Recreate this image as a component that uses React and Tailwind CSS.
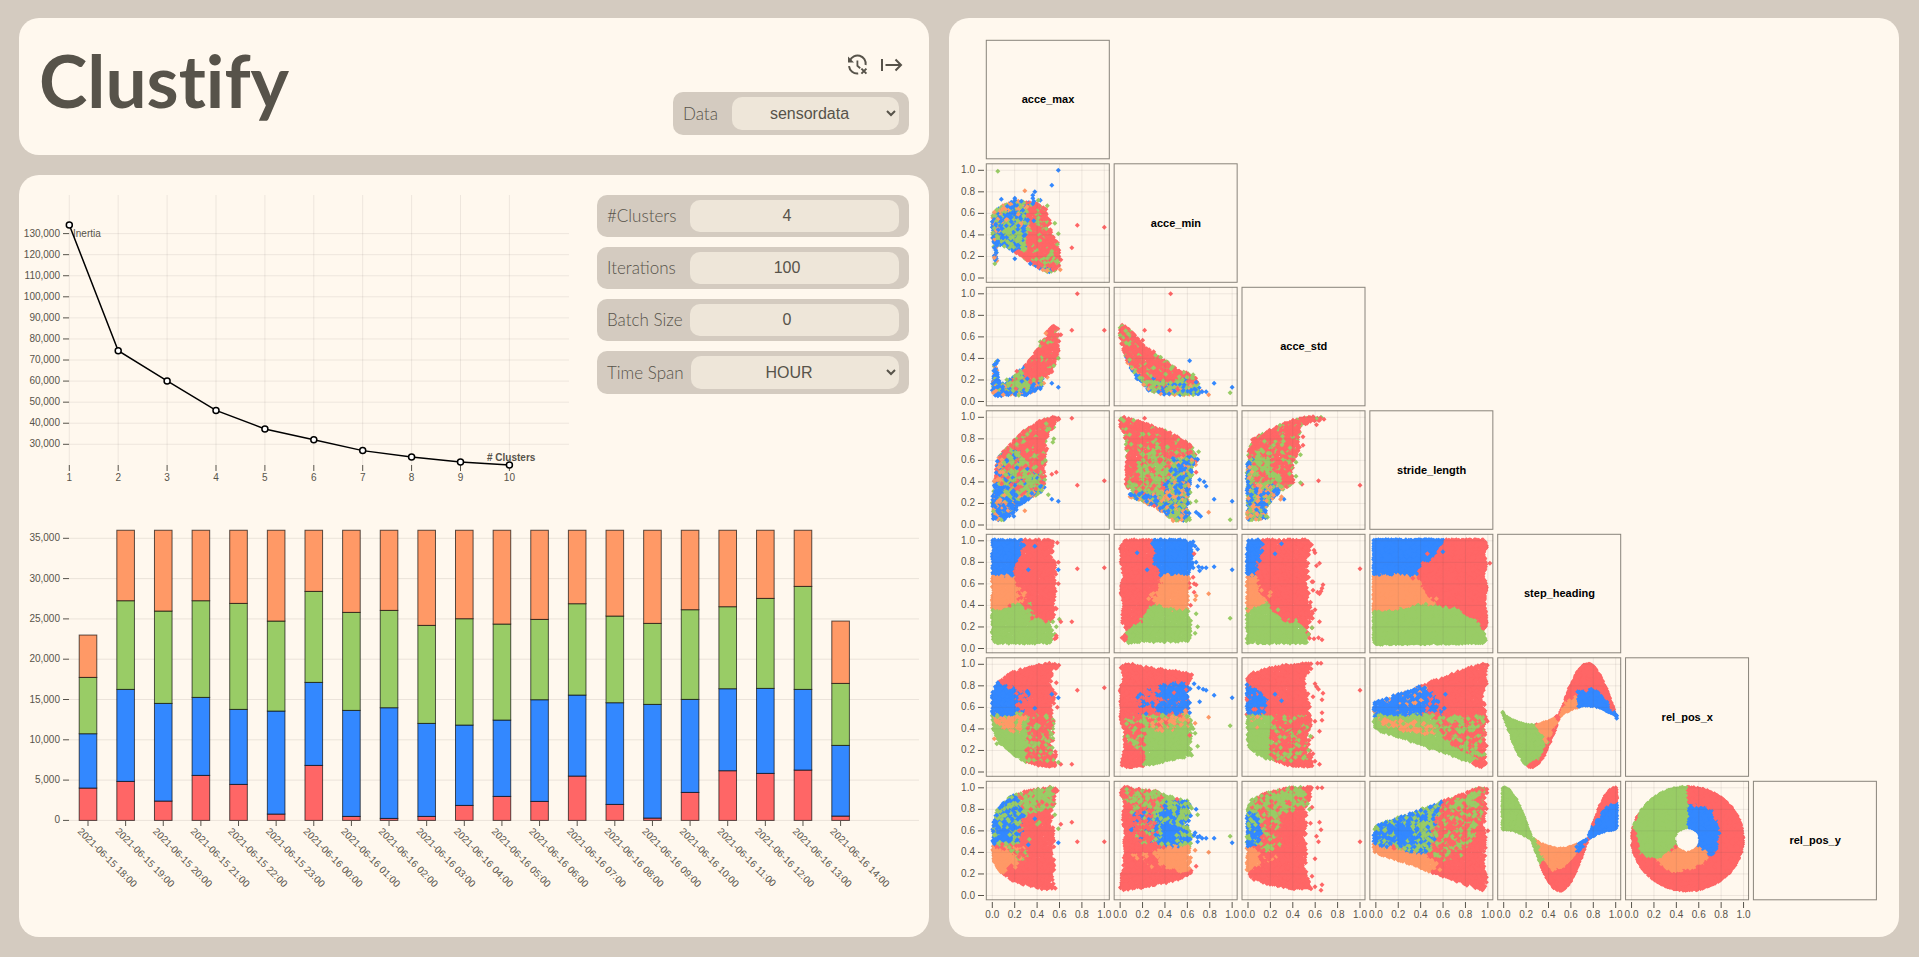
import React, { useMemo } from "react";

const INK = "#57534a";
const COLORS = { r: "#ff6666", b: "#3388ff", g: "#99cc66", o: "#ff9966" };

/* ---------- Inertia chart ---------- */

const inertia = [134100, 74400, 60100, 46100, 37300, 32200, 27000, 24000, 21600, 20200];

function ElbowChart() {
  const x = (k) => 50.3 + (k - 1) * 48.9;
  const y = (v) => 249.3 - ((v - 30000) / 10000) * 21.07;
  const ticks = Array.from({ length: 11 }, (_, i) => 130000 - i * 10000);
  return (
    <svg viewBox="0 0 578 322" className="block h-auto w-full text-[10px]" role="img" aria-label="Inertia by number of clusters">
      {inertia.map((_, i) => (
        <g key={i}>
          <line x1={x(i + 1)} x2={x(i + 1)} y1="0" y2="270" stroke={INK} strokeOpacity="0.1" />
          <line x1={x(i + 1)} x2={x(i + 1)} y1="270" y2="276" stroke={INK} />
          <text x={x(i + 1)} y="286" textAnchor="middle" fill={INK}>{i + 1}</text>
        </g>
      ))}
      {ticks.map((t) => (
        <g key={t}>
          <line x1="50" x2="550" y1={y(t)} y2={y(t)} stroke={INK} strokeOpacity="0.1" />
          <line x1="44" x2="50" y1={y(t)} y2={y(t)} stroke={INK} />
          <text x="41" y={y(t) + 3} textAnchor="end" fill={INK}>{t.toLocaleString("en-US")}</text>
        </g>
      ))}
      <text x="54" y={y(130000) + 3} fill={INK}>Inertia</text>
      <text x="468" y="266" fontWeight="700" fill={INK}>{"# Clusters"}</text>
      <polyline
        points={inertia.map((v, i) => `${x(i + 1)},${y(v)}`).join(" ")}
        fill="none"
        stroke="#000"
        strokeWidth="1.5"
      />
      {inertia.map((v, i) => (
        <circle key={i} cx={x(i + 1)} cy={y(v)} r="3" fill="#fff" stroke="#000" strokeWidth="1.5" />
      ))}
    </svg>
  );
}

/* ---------- Stacked bars: cumulative counts per hour ---------- */

const bars = [
  [4012, 10754, 17743, 22996],
  [4839, 16254, 27256, 36000],
  [2399, 14517, 25974, 36000],
  [5584, 15262, 27256, 36000],
  [4467, 13773, 26925, 36000],
  [786, 13566, 24733, 36000],
  [6824, 17123, 28414, 36000],
  [496, 13649, 25809, 36000],
  [248, 13980, 26057, 36000],
  [496, 12036, 24196, 36000],
  [1861, 11829, 25023, 36000],
  [2978, 12449, 24361, 36000],
  [2358, 14972, 24940, 36000],
  [5501, 15551, 26884, 36000],
  [1985, 14600, 25354, 36000],
  [290, 14393, 24444, 36000],
  [3474, 15014, 26140, 36000],
  [6163, 16337, 26512, 36000],
  [5832, 16379, 27546, 36000],
  [6245, 16254, 29035, 36000],
  [538, 9306, 16999, 24733],
];

function hourLabel(i) {
  const h = 18 + i;
  return `2021-06-${h < 24 ? 15 : 16} ${String(h % 24).padStart(2, "0")}:00`;
}

function StackedBars() {
  const x = (i) => 69 + i * 37.63;
  const y = (v) => 303.4 - (v / 5000) * 40.3;
  const fills = [COLORS.r, COLORS.b, COLORS.g, COLORS.o];
  return (
    <svg viewBox="0 0 910 400" className="block h-auto w-full text-[10px]" role="img" aria-label="Cluster sizes by hour">
      {[0, 1, 2, 3, 4, 5, 6, 7].map((k) => (
        <g key={k}>
          <line x1="50" x2="900" y1={y(k * 5000)} y2={y(k * 5000)} stroke={INK} strokeOpacity="0.12" />
          <line x1="44" x2="50" y1={y(k * 5000)} y2={y(k * 5000)} stroke={INK} />
          <text x="41" y={y(k * 5000) + 3} textAnchor="end" fill={INK}>{(k * 5000).toLocaleString("en-US")}</text>
        </g>
      ))}
      {bars.map((b, i) => (
        <g key={i}>
          {b.map((v, j) => (
            <rect
              key={j}
              x={x(i) - 8.8}
              width="17.6"
              y={y(v)}
              height={y(j ? b[j - 1] : 0) - y(v)}
              fill={fills[j]}
              stroke="#000"
              strokeOpacity="0.65"
            />
          ))}
          <line x1={x(i)} x2={x(i)} y1="304" y2="309" stroke={INK} />
          <text transform={`translate(${x(i) - 11} 315) rotate(45)`} fill={INK}>{hourLabel(i)}</text>
        </g>
      ))}
    </svg>
  );
}

/* ---------- Scatter matrix ---------- */

const features = ["acce_max", "acce_min", "acce_std", "stride_length", "step_heading", "rel_pos_x", "rel_pos_y"];

const wedge = [-2, 64, 94, 100, 100, 101, 97, 91, 99, 81, 96, 66, 99, 50, 97, 35, 99, 20, 97, 4, 90, 6, 78, 12, -2, 40];

function band(shape) {
  const top = [];
  const bottom = [];
  for (let u = -1; u <= 101; u += 2) {
    const s = shape((u / 100) * 2 * Math.PI);
    const a = 52.5 + 47.5 * s;
    const c = 52.5 + 9.5 * s;
    top.push(u, Math.max(a, c) + 0.5);
    bottom.unshift([u, Math.min(a, c) - 0.5]);
  }
  return top.concat(...bottom);
}

const disc = Array.from({ length: 48 }, (_, i) => {
  const t = (i / 48) * 2 * Math.PI;
  return [50 + 49.5 * Math.cos(t), 52.6 + 48 * Math.sin(t)];
}).flat();

/* Every region is a flat list of u,v pairs in percent of the axis range;
   its mix lists the cluster colours that occur there. */
const cells = {
  "1-0": {
    outline: [0, 56, 2, 63, 7, 66, 19, 72, 31, 70, 41, 70, 49, 63, 51, 47, 54, 41, 59, 28, 60, 7, 51, 5, 43, 8, 31, 16, 22, 22, 13, 29, 7, 30, 4, 27, 4, 13, 2, 13, 0, 41],
    mix: "bgobbg",
    zones: [
      ["rrrrrrg", [32, 72, 43, 72, 52, 64, 62, 40, 62, 4, 31, 14, 20, 24, 30, 40]],
      ["gggggb", [10, 48, 22, 50, 32, 36, 30, 24, 14, 30]],
    ],
    noise: 4,
    extra: "g5,99 b59,100 b53,86 b38,80 b8,73 o29,81 r76,49 r100,47 r71,28 r61,17 g59,41 g56,51 g49,67 b43,72 g41,72 g35,68 b36,69 o31,66 g53,25 g53,22 g47,14 g41,56 b37,53 b20,74 b20,72 b36,77 b36,74 b37,71 b26,71 b34,13 b20,18",
  },
  "2-0": {
    outline: [0, 5, 0, 13, 2, 37, 4, 37, 5, 23, 7, 16, 13, 18, 20, 24, 31, 35, 43, 54, 54, 70, 58, 71, 60, 50, 57, 33, 50, 24, 43, 13, 31, 6],
    mix: "bgobb",
    zones: [
      ["ggggrb", [10, 8, 15, 20, 30, 33, 45, 20, 30, 12]],
      ["rrrrrrrg", [27, 26, 31, 37, 43, 56, 54, 73, 62, 71, 60, 30, 45, 22, 35, 16]],
    ],
    noise: 2,
    extra: "r76,100 r71,66 r100,66 r61,62 r22,28 b5,38 b53,17 b59,13 g13,20 g59,40 g55,33 b43,12 b38,10",
  },
  "2-1": {
    outline: [-1, 66, 1, 71, 5, 70, 12, 63, 21, 52, 31, 44, 47, 33, 65, 24, 70, 16, 72, 10, 71, 6, 41, 6, 26, 10, 15, 21, 6, 37, 1, 54],
    mix: "rrrrrg",
    zones: [
      ["bgogb", [3, 42, 8, 36, 15, 27, 30, 14, 45, 12, 60, 17, 76, 18, 76, 0, 20, 0]],
      ["ggggrb", [18, 25, 26, 22, 40, 18, 60, 22, 62, 16, 45, 9, 28, 11]],
    ],
    noise: 3,
    extra: "r45,100 r22,66 r44,66 r20,57 b62,38 b84,17 b100,13 g98,8 o79,6 b77,9 b73,9 b68,18 g8,53 g36,41 g47,32 g65,25 r30,46",
  },
  "3-0": {
    outline: [0, 5, 0, 23, 2, 44, 5, 63, 13, 72, 25, 85, 40, 95, 57, 101, 60, 98, 54, 89, 49, 81, 49, 60, 46, 54, 48, 35, 43, 30, 28, 21, 19, 12, 10, 4],
    mix: "rrrrg",
    zones: [
      ["gggrrgb", [5, 62, 20, 72, 35, 55, 46, 45, 46, 35, 30, 25, 5, 40]],
      ["oogbr", [-2, 60, -2, 30, 8, 38, 9, 68]],
      ["bbbgo", [-2, -2, -2, 40, 12, 36, 25, 26, 48, 38, 50, 28, 30, -2]],
    ],
    noise: 4,
    extra: "r71,99 r76,37 r100,41 r53,47 r57,49 b53,24 b59,22 o29,13 g55,80 g50,28 g48,94 g54,77 b19,8 r59,99",
  },
  "3-1": {
    outline: [-1, 98, 3, 101, 15, 97, 29, 92, 47, 85, 62, 75, 67, 69, 68, 60, 64, 44, 62, 13, 62, 4, 49, 4, 38, 12, 24, 20, 8, 26, 7, 29, 14, 31, 5, 35, 6, 66, 4, 85, 0, 92],
    mix: "rrrrrg",
    zones: [
      ["ggrgr", [8, 35, 22, 70, 45, 72, 52, 50, 45, 20, 25, 22]],
      ["bbgog", [45, 45, 48, 64, 70, 66, 70, 0, 48, 2, 30, 17, 8, 22, 8, 31, 35, 30]],
      ["ggggr", [28, 40, 30, 58, 40, 56, 42, 38]],
    ],
    noise: 5,
    extra: "b71,42 b77,36 b84,24 b100,22 b69,36 b72,8 b75,40 o79,12 g98,5 g70,68 g68,22 r22,99 r68,49 r60,75 b69,61 b70,10 b68,12",
  },
  "3-2": {
    outline: [-1, 4, -1, 54, 1, 72, 4, 80, 16, 86, 31, 94, 49, 100, 67, 101, 68, 98, 58, 96, 48, 92, 45, 81, 46, 69, 42, 63, 39, 47, 42, 38, 31, 33, 24, 26, 16, 16, 18, 6],
    mix: "rrrrrg",
    zones: [
      ["gggrrg", [0, 62, 10, 74, 20, 65, 30, 42, 25, 25, 0, 20]],
      ["bgobgo", [-3, 32, 8, 38, 30, 37, 36, 28, 20, -2, -3, -2]],
      ["bogb", [-3, 65, 3, 62, 3, 20, -3, 20]],
    ],
    noise: 4,
    extra: "r100,37 r63,41 r61,93 r49,82 r49,74 r48,38 g47,65 g43,58 g47,39 b32,24 o29,24 o30,26 g43,45 g16,8",
  },
  "4-0": {
    outline: [0, 101, 53, 101, 56, 98, 53, 88, 57, 78, 56, 66, 57, 57, 55, 32, 53, 23, 55, 13, 51, 5, 2, 5, 0, 9],
    mix: "r",
    zones: [
      ["b", [-3, 104, 27, 104, 26, 90, 23, 82, 19, 68, -3, 68]],
      ["o", [-3, 68, 20, 68, 21, 60, 20, 48, 30, 40, 20, 41, 10, 38, -3, 35]],
      ["ro", [20, 66, 23, 62, 31, 50, 32, 40, 25, 40, 20, 55]],
      ["g", [-3, 35, 12, 38, 20, 41, 33, 40, 34, 30, 45, 26, 56, 22, 56, 0, -3, 0]],
      ["gr", [27, 42, 37, 42, 38, 27, 33, 27]],
    ],
    noise: 2,
    extra: "r76,74 r100,75 r71,25 r58,98 r59,80 r59,60 r57,37 r57,10 r56,9 b38,95 b59,73 b32,73 b28,96 g60,27 r61,25 r57,12 g57,20 g54,25",
  },
  "4-1": {
    outline: [0, 94, 4, 101, 58, 101, 65, 97, 64, 75, 62, 69, 61, 50, 61, 32, 64, 23, 62, 7, 6, 5, 2, 9, 6, 16, 1, 26, 3, 44, 0, 54, 3, 69, 1, 78],
    mix: "r",
    zones: [
      ["b", [28, 104, 28, 95, 32, 88, 30, 78, 34, 74, 36, 68, 63, 68, 72, 75, 66, 104]],
      ["o", [36, 68, 62, 68, 62, 35, 45, 36, 32, 40, 28, 45, 33, 58]],
      ["rrro", [22, 46, 36, 68, 36, 60, 30, 42]],
      ["g", [32, 40, 45, 36, 62, 35, 66, 30, 66, 0, 3, 3, 8, 20, 18, 26, 25, 38]],
    ],
    noise: 3,
    extra: "b69,92 b70,76 b73,75 b77,75 b84,76 b100,73 b71,72 b67,95 b15,89 b24,73 b68,80 o79,51 o67,45 o68,49 r66,60 r68,59 r66,52 r63,40 r2,10 g98,28 g69,20 g68,32 g67,14 r65,66 r66,88 b65,99",
  },
  "4-2": {
    outline: [-1, 101, 55, 101, 57, 94, 52, 81, 55, 69, 52, 60, 55, 44, 58, 29, 53, 20, 55, 10, 52, 5, -1, 5],
    mix: "r",
    zones: [
      ["b", [-3, 104, 15, 104, 13, 90, 9, 80, 8, 68, -3, 68]],
      ["o", [-3, 68, 8, 68, 10, 55, 16, 42, 10, 38, 0, 36, -3, 35]],
      ["g", [-3, 35, 10, 40, 18, 42, 25, 30, 34, 26, 42, 26, 50, 18, 55, 0, -3, 0]],
    ],
    noise: 3,
    extra: "r100,74 r59,91 r64,79 r61,77 r67,59 r65,53 r57,62 r62,52 r56,43 r60,36 r64,25 r57,19 r63,10 r66,8 r59,9 r58,62 b24,88 b30,97 g54,13 g57,19 r64,51 r66,56 r58,54 r60,89 o19,49 o20,52 g27,36",
  },
  "4-3": {
    outline: [-2, 101, 97, 101, 99, 94, 96, 88, 99, 78, 96, 69, 99, 57, 97, 44, 99, 24, 96, 16, 98, 7, 96, 5, 0, 4, -2, 7],
    mix: "r",
    zones: [
      ["b", [-5, 104, 63, 104, 57, 92, 48, 82, 40, 78, 36, 68, -5, 68]],
      ["o", [-5, 68, 36, 68, 42, 56, 50, 45, 56, 40, 30, 39, 20, 37, -5, 33]],
      ["g", [-5, 33, 20, 37, 30, 39, 45, 41, 60, 39, 75, 37, 83, 30, 93, 24, 98, 10, 98, 0, -5, 0]],
    ],
    noise: 1,
    extra: "r102,79 r33,65 r46,88 b60,90 o54,46",
  },
  "5-0": {
    outline: [0, 49, 0, 74, 5, 84, 16, 92, 31, 97, 51, 101, 59, 101, 60, 98, 54, 94, 52, 83, 56, 72, 53, 57, 56, 47, 53, 32, 55, 23, 57, 6, 53, 4, 43, 6, 28, 10, 16, 18, 7, 26, 1, 38],
    mix: "r",
    zones: [
      ["b", [-3, 75, 6, 84, 10, 80, 20, 78, 25, 72, 28, 53, -3, 53]],
      ["rrb", [20, 78, 32, 75, 30, 53, 22, 53]],
      ["g", [-3, 53, 35, 53, 33, 8, 20, 5, -3, 35]],
      ["grr", [33, 53, 56, 53, 57, 10, 30, 8]],
      ["oogo", [-3, 52, 30, 52, 25, 37, 8, 41]],
    ],
    noise: 3,
    extra: "r76,76 r100,78 r71,7 r61,7 r58,60 b38,59 b59,69 b53,72 b32,73 g59,9 o2,31 r57,83 g4,26",
  },
  "5-1": {
    outline: [0, 98, 6, 101, 19, 98, 32, 96, 47, 94, 64, 91, 62, 81, 62, 54, 64, 38, 62, 26, 64, 15, 50, 12, 29, 7, 6, 4, 1, 6, 3, 16, 4, 38, 0, 50, 0, 78, 3, 88],
    mix: "r",
    zones: [
      ["rrrb", [15, 53, 15, 72, 30, 78, 32, 53]],
      ["bbbbbbbr", [26, 74, 40, 83, 55, 83, 64, 77, 73, 72, 70, 58, 63, 54, 30, 54, 36, 66]],
      ["grr", [4, 53, 24, 53, 24, 12, 4, 32]],
      ["g", [22, 53, 65, 53, 66, 18, 60, 8, 22, 6]],
      ["ogor", [24, 50, 62, 54, 62, 42, 28, 38]],
    ],
    noise: 3,
    extra: "b70,78 b74,77 b77,76 b84,71 b100,69 b71,65 b66,82 o79,51 o67,45 g98,43 g69,24 g67,36 r62,34 g65,40 o58,57",
  },
  "5-2": {
    outline: [-1, 66, -1, 86, 4, 92, 19, 97, 40, 100, 57, 101, 55, 94, 51, 89, 51, 78, 55, 72, 54, 57, 58, 46, 55, 38, 54, 29, 55, 16, 58, 5, 43, 5, 25, 9, 10, 15, 1, 23, -1, 40],
    mix: "r",
    zones: [
      ["bbbbr", [-3, 82, 6, 78, 12, 72, 18, 66, 15, 53, -3, 53]],
      ["g", [-3, 53, 24, 53, 22, 5, -3, 5]],
      ["rrgr", [20, 53, 53, 53, 54, 10, 20, 10]],
      ["ogg", [-3, 52, 12, 52, 10, 38, -3, 40]],
    ],
    noise: 3,
    extra: "r100,76 r62,101 r65,101 r60,82 r61,79 r63,77 r67,73 r66,67 r58,70 r66,55 r66,48 r60,47 r64,38 r57,32 r58,17 r64,7 r60,10 g56,33 g54,20 b30,66 b24,72",
  },
  "5-3": {
    outline: wedge,
    mix: "r",
    zones: [
      ["bbbbbbbo", [-5, 64, 15, 72, 38, 82, 46, 76, 40, 53, -5, 53]],
      ["brb", [40, 53, 46, 76, 56, 70, 60, 53]],
      ["ob", [20, 62, 40, 68, 40, 60]],
      ["g", [-5, 53, 62, 53, 70, 40, 95, 14, 82, 8, -5, 38]],
      ["grgr", [50, 53, 97, 53, 98, 16, 80, 14, 60, 32]],
      ["oogo", [0, 51, 35, 48, 55, 42, 50, 34, 38, 36, 10, 41]],
    ],
    noise: 3,
    extra: "b62,72 b61,59",
  },
  "5-4": {
    outline: band((t) => -Math.sin(t)),
    mix: "r",
    zones: [
      ["g", [-4, 60, 10, 52, 26, 48, 33, 38, 39, 28, 35, 22, 32, 12, 25, 8, 18, 6, 8, 6, -4, 40]],
      ["o", [27, 48, 33, 38, 38, 27, 42, 35, 50, 52, 56, 65, 66, 71, 66, 52]],
      ["b", [66, 50, 66, 75, 74, 76, 78, 80, 88, 73, 94, 62, 100, 54, 106, 50, 106, 40]],
    ],
    noise: 1,
    extra: "",
  },
  "6-0": {
    outline: [0, 47, 0, 66, 5, 81, 16, 92, 31, 97, 54, 101, 59, 99, 56, 91, 54, 78, 53, 66, 56, 50, 53, 41, 56, 29, 53, 16, 57, 7, 54, 5, 40, 7, 19, 13, 5, 24, 0, 35],
    mix: "r",
    zones: [
      ["gbgb", [-3, 46, 24, 48, 28, 70, 28, 99, 5, 87, -3, 65]],
      ["bbbbg", [3, 50, 18, 52, 18, 66, 6, 74]],
      ["gggr", [20, 95, 54, 103, 56, 82, 28, 74]],
      ["o", [-3, 47, 10, 42, 22, 38, 25, 30, 15, 25, 5, 18, -3, 25]],
      ["gor", [12, 46, 26, 46, 35, 40, 25, 30]],
    ],
    noise: 3,
    extra: "r71,68 r76,50 r100,50 r61,66 b38,71 b59,49 b32,47 g59,62 g56,75 g42,68 g40,66 r24,60 g33,52",
  },
  "6-1": {
    outline: [0, 97, 3, 101, 12, 99, 32, 97, 47, 91, 62, 88, 64, 78, 59, 66, 65, 54, 62, 41, 62, 26, 65, 20, 47, 13, 24, 8, 3, 5, 0, 7, 3, 29, 4, 54, 2, 72, 4, 85],
    mix: "r",
    zones: [
      ["gggr", [4, 99, 35, 97, 60, 90, 60, 72, 30, 72, 5, 88]],
      ["rrgbr", [12, 52, 10, 80, 34, 82, 34, 46]],
      ["bgbg", [32, 46, 30, 76, 40, 86, 62, 90, 67, 78, 67, 48, 45, 44]],
      ["b", [36, 50, 38, 66, 52, 66, 50, 48]],
      ["o", [24, 40, 45, 46, 62, 46, 65, 35, 60, 22, 48, 23, 38, 28, 20, 34]],
      ["ror", [12, 38, 30, 44, 36, 32, 28, 24]],
    ],
    noise: 4,
    extra: "b68,80 b71,55 b77,53 b84,53 b100,49 b69,54 b73,53 g98,55 g69,75 o79,40 o67,42 r68,27 b67,58 b69,50 b66,56",
  },
  "6-2": {
    outline: [-1, 47, -1, 78, 3, 89, 16, 95, 37, 100, 58, 101, 57, 91, 51, 81, 52, 66, 51, 53, 52, 41, 51, 23, 58, 6, 40, 6, 19, 10, 4, 15, -1, 23],
    mix: "r",
    zones: [
      ["gggr", [2, 90, 50, 103, 52, 84, 30, 76, 15, 65, 6, 82]],
      ["grr", [8, 75, 30, 74, 28, 44, 10, 38]],
      ["bbgb", [-3, 76, 6, 82, 12, 62, 9, 46, -3, 46]],
      ["g", [-3, 90, 6, 90, 4, 78, -3, 74]],
      ["o", [-3, 46, 6, 45, 12, 36, 10, 28, -3, 18]],
      ["ror", [10, 42, 28, 38, 16, 28]],
    ],
    noise: 3,
    extra: "r100,50 r62,100 r66,100 r57,82 r64,68 r65,61 r61,55 r63,50 r60,34 r57,18 r60,8 r66,10 r65,5 r56,67 g53,85 g55,80",
  },
  "6-3": {
    outline: wedge,
    mix: "r",
    zones: [
      ["grr", [40, 40, 46, 60, 60, 88, 94, 101, 97, 97, 95, 78, 84, 45, 64, 30]],
      ["gggr", [70, 88, 92, 97, 90, 82, 75, 76]],
      ["gb", [-5, 47, -5, 68, 40, 82, 60, 88, 52, 65, 50, 45, 44, 36, 20, 44]],
      ["bbbbg", [-5, 50, -3, 60, 20, 68, 40, 62, 34, 50, 16, 48]],
      ["o", [-5, 48, 15, 44, 40, 38, 50, 34, 55, 27, 45, 18, -5, 36]],
    ],
    noise: 3,
    extra: "r100,60 o54,30 o57,24",
  },
  "6-4": {
    outline: band((t) => Math.cos(t)),
    mix: "r",
    zones: [
      ["g", [-4, 106, 8, 106, 20, 88, 27, 58, 34, 42, 38, 32, 33, 30, 28, 40, 24, 46, 10, 50, -4, 50]],
      ["o", [28, 52, 35, 34, 42, 23, 55, 27, 66, 40, 66, 52, 50, 50]],
      ["b", [65, 54, 65, 38, 72, 47, 78, 62, 88, 78, 98, 87, 106, 86, 106, 50]],
    ],
    noise: 1,
    extra: "",
  },
  "6-5": {
    outline: disc,
    hole: [49.7, 51.5, 11.5],
    mix: "r",
    zones: [
      ["g", [50, 106, 50, 55, 40, 48, 33, 38, 22, 33, 8, 38, 6, 50, 2, 65, 10, 82, 30, 103]],
      ["b", [50, 50, 50, 86, 60, 83, 73, 80, 73, 72, 78, 67, 78, 55, 76, 42, 70, 37, 58, 46]],
      ["o", [50, 52, 70, 38, 63, 28, 50, 24, 35, 22, 22, 33, 34, 40]],
    ],
    noise: 1,
    extra: "",
  },
};

function inside(poly, u, v) {
  let hit = false;
  for (let i = 0, j = poly.length - 2; i < poly.length; j = i, i += 2) {
    const yi = poly[i + 1];
    const yj = poly[j + 1];
    if (yi > v !== yj > v && u < ((poly[j] - poly[i]) * (v - yi)) / (yj - yi) + poly[i]) hit = !hit;
  }
  return hit;
}

function random(seed) {
  let s = seed;
  return () => {
    s = (s + 0x6d2b79f5) | 0;
    let t = Math.imul(s ^ (s >>> 15), 1 | s);
    t = (t + Math.imul(t ^ (t >>> 7), 61 | t)) ^ t;
    return ((t ^ (t >>> 14)) >>> 0) / 4294967296;
  };
}

const BOX = { w: 123.5, h: 119 };
const ux = (u) => 6 + u * 1.12;
const vy = (v) => 114.2 - v * 1.077;
const mark = (x, y) => `M${Math.round(x * 2) / 2} ${Math.round(y * 2) / 2}l-2.5 2.5 2.5 2.5 2.5-2.5z`;

function buildLayers(cell, seed) {
  const rnd = random(seed);
  const points = [];
  const smooth = cell.noise <= 1;
  const step = smooth ? 1.2 : 1.8;
  for (let px = 2; px < 122; px += step) {
    for (let py = 2; py < 117; py += step) {
      const x = px + (rnd() - 0.5) * step;
      const y = py + (rnd() - 0.5) * step;
      const u = (x - 6) / 1.12;
      const v = (114.2 - y) / 1.077;
      /* the far side of a noisy cloud frays out */
      const fray = smooth || u < 40 ? 0 : (rnd() - 0.3) * 4;
      if (!inside(cell.outline, u + fray, v)) continue;
      if (cell.hole && Math.hypot(u - cell.hole[0], v - cell.hole[1]) < cell.hole[2]) continue;
      const nu = u + (rnd() - 0.5) * cell.noise;
      const nv = v + (rnd() - 0.5) * cell.noise;
      let mix = cell.mix;
      for (const [m, poly] of cell.zones) if (inside(poly, nu, nv)) mix = m;
      points.push({ x, y, c: mix[Math.floor(rnd() * mix.length)], k: rnd() });
    }
  }
  points.sort((a, b) => a.k - b.k);
  const layers = [];
  const size = Math.ceil(points.length / 14);
  for (let i = 0; i < points.length; i += size) {
    const d = {};
    for (const p of points.slice(i, i + size)) d[p.c] = (d[p.c] || "") + mark(p.x, p.y - 2.5);
    layers.push(...Object.entries(d));
  }
  for (const item of cell.extra.split(" ").filter(Boolean)) {
    const [u, v] = item.slice(1).split(",").map(Number);
    layers.push([item[0], mark(ux(u), vy(v) - 2.5)]);
  }
  return layers;
}

const TICKS = [0, 20, 40, 60, 80, 100];

function ScatterCell({ row, col }) {
  const layers = useMemo(() => buildLayers(cells[`${row}-${col}`], row * 97 + col * 13 + 5), [row, col]);
  return (
    <>
      {layers.map(([c, d], i) => (
        <path key={i} d={d} fill={COLORS[c]} />
      ))}
      {TICKS.map((t) => (
        <g key={t} stroke={INK} strokeOpacity="0.1">
          <line x1={ux(t)} x2={ux(t)} y1="0" y2={BOX.h} />
          <line x1="0" x2={BOX.w} y1={vy(t)} y2={vy(t)} />
        </g>
      ))}
    </>
  );
}

function ScatterMatrix() {
  const left = (c) => 37.3 + c * 127.85;
  const top = (r) => 22.3 + r * 123.5;
  return (
    <svg viewBox="0 0 950 919" className="block h-auto w-full text-[10px]" role="img" aria-label="Scatter matrix of features">
      {features.map((name, r) => (
        <g key={name}>
          {features.slice(0, r + 1).map((other, c) => (
            <g key={other} transform={`translate(${left(c)} ${top(r)})`}>
              {c < r ? (
                <ScatterCell row={r} col={c} />
              ) : (
                <text x={BOX.w / 2} y="63" textAnchor="middle" className="text-[11px] font-bold" fill="#000">
                  {name}
                </text>
              )}
              <rect width={BOX.w - 0.5} height={BOX.h - 0.5} fill="none" stroke={INK} strokeOpacity="0.7" />
            </g>
          ))}
          {r > 0 &&
            TICKS.map((t) => (
              <g key={t} transform={`translate(0 ${top(r) + vy(t)})`}>
                <line x1="29" x2="35" stroke={INK} />
                <text x="26" y="3" textAnchor="end" fill={INK}>{(t / 100).toFixed(1)}</text>
              </g>
            ))}
          {r < 6 &&
            TICKS.map((t) => (
              <g key={t} transform={`translate(${left(r) + ux(t)} 884)`}>
                <line y2="6" stroke={INK} />
                <text y="16" textAnchor="middle" fill={INK}>{(t / 100).toFixed(1)}</text>
              </g>
            ))}
        </g>
      ))}
    </svg>
  );
}

/* ---------- Controls ---------- */

function HistoryClearIcon() {
  return (
    <svg viewBox="0 0 24 24" className="size-6" fill="none" stroke={INK} strokeWidth="2" aria-hidden="true">
      <path d="M4.900 7.600A8.200 8.200 0 0 1 20.600 12" />
      <path d="M4 13.200a8.200 8.200 0 0 0 9.200 7.200" />
      <path d="M3 3.600v6h6z" fill={INK} stroke="none" />
      <path d="M12.400 7.600v5.200l2.800 2.400" strokeWidth="1.8" />
      <path d="M16.400 15.600l5 5M21.400 15.600l-5 5" />
    </svg>
  );
}

function ArrowFromLineIcon() {
  return (
    <svg viewBox="0 0 24 24" className="size-6" fill="none" stroke={INK} strokeWidth="2" aria-hidden="true">
      <path d="M3 6v12M6.500 12H22M16.500 6.500l5.500 5.500-5.500 5.500" />
    </svg>
  );
}

const labelClass = "shrink-0 font-['Lato',sans-serif] text-[17px] font-light";
const fieldClass =
  "min-w-0 flex-1 rounded-[10px] bg-[#eee6d9] text-center text-base text-[#57534a] outline-none";

function NumberRow({ id, label, value }) {
  return (
    <div className="flex h-[42px] items-center rounded-[10px] bg-[#d4cbc0] px-2.5">
      <label htmlFor={id} className={`${labelClass} w-[83px]`}>{label}</label>
      <input id={id} type="number" defaultValue={value} className={`${fieldClass} h-8`} />
    </div>
  );
}

export default function App() {
  return (
    <main className="grid min-h-screen grid-cols-[91fr_95fr] items-start gap-5 bg-[#d4cbc0] pt-[18px] pr-5 pb-5 pl-[19px] font-['Liberation_Sans',Arial,sans-serif] text-[#57534a]">
      <div className="flex flex-col gap-5">
        <header className="flex items-start justify-between rounded-[20px] bg-[#fff8ee] p-5">
          <h1 className="font-['Lato',sans-serif] text-[73px] leading-[84px] font-bold [font-variant-ligatures:none]">Clustify</h1>
          <div className="flex flex-col items-end pt-[15px]">
            <div className="mb-[15px] flex gap-[10px] pr-1.5">
              <button type="button" aria-label="Clear history"><HistoryClearIcon /></button>
              <button type="button" aria-label="Collapse"><ArrowFromLineIcon /></button>
            </div>
            <div className="flex h-[43px] w-[236px] items-center rounded-[10px] bg-[#d4cbc0] px-2.5">
              <label htmlFor="data" className={`${labelClass} w-[49px]`}>Data</label>
              <select id="data" className={`${fieldClass} h-[33px]`}>
                <option>sensordata</option>
              </select>
            </div>
          </div>
        </header>
        <section className="rounded-[20px] bg-[#fff8ee] py-5">
          <div className="flex items-start pr-5">
            <div className="min-w-0 flex-1">
              <ElbowChart />
            </div>
            <form className="flex w-[312px] flex-col gap-2.5">
              <NumberRow id="clusters" label="#Clusters" value="4" />
              <NumberRow id="iterations" label="Iterations" value="100" />
              <NumberRow id="batch" label="Batch Size" value="0" />
              <div className="flex h-[43px] items-center rounded-[10px] bg-[#d4cbc0] px-2.5">
                <label htmlFor="span" className={`${labelClass} w-[84px]`}>Time Span</label>
                <select id="span" className={`${fieldClass} h-[33px]`}>
                  <option>HOUR</option>
                </select>
              </div>
            </form>
          </div>
          <StackedBars />
        </section>
      </div>
      <section className="rounded-[20px] bg-[#fff8ee]">
        <ScatterMatrix />
      </section>
    </main>
  );
}
